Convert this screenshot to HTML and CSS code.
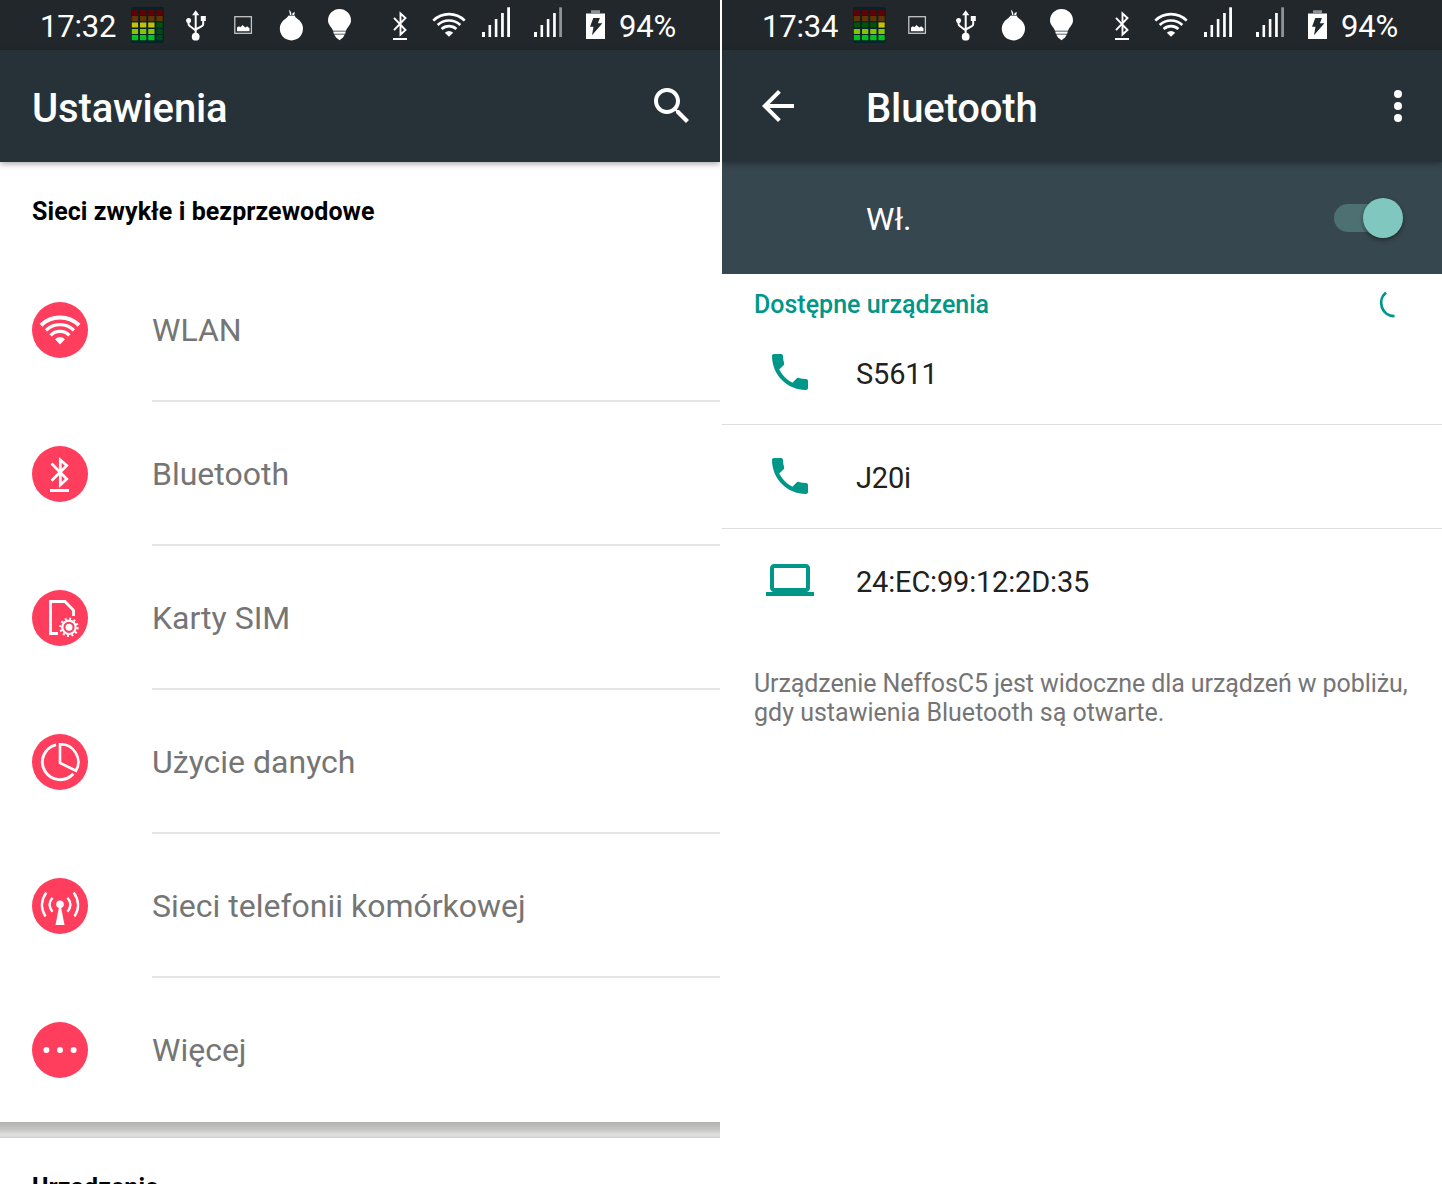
FILE: index.html
```html
<!DOCTYPE html>
<html lang="pl">
<head>
<meta charset="utf-8">
<title>Ustawienia</title>
<link rel="stylesheet" href="styles.css">
</head>
<body>
<svg class="sprite" aria-hidden="true">
  <symbol id="usb" viewBox="0 0 48 50">
    <path d="M23.700 14V36M16.500 21v2.800q0 1.500 1.300 2.200L23.700 30.500M31.200 19v5q0 1.500-1.300 2.200L23.700 29.500" fill="none" stroke="#fff" stroke-width="2"/>
    <path d="M23.700 10.200l3.600 5h-7.200zM28.800 16h5v5h-5z" fill="#fff"/>
    <circle cx="16.600" cy="20.600" r="2.500" fill="#fff"/><circle cx="23.700" cy="36.700" r="3.900" fill="#fff"/>
  </symbol>
  <symbol id="image" viewBox="0 0 48 50">
    <rect x="14.800" y="16.700" width="16.600" height="16.600" fill="none" stroke="#c3c5c6" stroke-width="1.300"/>
    <path d="M17 31.300v-3.800l1.800-1.200 1.500 1 2.300-2.400 1.800 1.800 1.200.8 1.500-1.200 2.400 2v3z" fill="#fff"/>
  </symbol>
  <symbol id="onion" viewBox="0 0 48 50">
    <path d="M20.500 15h6q.3 2.400 3.100 4a11.600 11.600 0 1 1-12.400 0q2.800-1.600 3.300-4z" fill="#fff"/>
    <path d="M22.200 15.500L20.900 9.500l2.100 2.500.5 3.500zM24.100 15.500l.5-2.400 2.300-1.200-.8 3.600z" fill="#fff"/>
    <path d="M20 15.500h6.800" stroke="#22272b" stroke-width=".6"/>
  </symbol>
  <symbol id="bulb" viewBox="0 0 48 50">
    <path d="M23.500 9A11.500 11.500 0 0 1 35 20.500c0 4.500-4 6.800-5 10.200H17c-1-3.400-5-5.700-5-10.200A11.500 11.500 0 0 1 23.500 9zM17.200 31.500h12.600l-.6 2.300H17.800zM18.200 34.600h10.600l-1.800 3-3.500 2.700-3.500-2.700z" fill="#fff"/>
  </symbol>
  <symbol id="bt" viewBox="384 0 40 50">
    <path d="M394 17.800L405.500 30 400.500 34.500V13.500L405.500 18 394 30.200" fill="none" stroke="#fff" stroke-width="1.900"/><path d="M393 38h14v2h-14z" fill="#fff"/>
  </symbol>
  <symbol id="wifi" viewBox="424 0 50 50">
    <path d="M433.300 20.600A22.500 22.500 0 0 1 464.700 20.600M437.700 25A16.500 16.500 0 0 1 460.300 25M441.600 28.900A11 11 0 0 1 456.400 28.900" fill="none" stroke="#fff" stroke-width="2.700"/>
    <path d="M444.800 32.800Q449 29 453.200 32.800L449 36.800z" fill="#fff"/>
  </symbol>
  <symbol id="signal" viewBox="474 0 52 50">
    <path d="M482 32h3v5h-3zM488.500 25h2.600v12h-2.600zM494.800 19h2.600v18h-2.600zM501.100 13h2.700v24h-2.700z" fill="#fff"/><path d="M507.200 7.300h2.800V37h-2.800z" fill="currentColor"/>
  </symbol>
  <symbol id="battery" viewBox="578 0 35 50">
    <path d="M591 10.300h9V13h5v2h-19v-2h5z" fill="#8f9395"/><path d="M586 14h19v25h-19z" fill="#fff"/>
    <path d="M593.300 18h6.600l-2 5.300h4.500L592 35.300l1.500-8.600h-3.500z" fill="#22272b"/>
  </symbol>
  <symbol id="phone" viewBox="0 0 24 24">
    <path fill="#009688" d="M6.620 10.790c1.440 2.830 3.760 5.140 6.590 6.590l2.200-2.200c.27-.27.67-.36 1.020-.24 1.120.37 2.330.57 3.570.57.550 0 1 .45 1 1V20c0 .55-.45 1-1 1-9.390 0-17-7.610-17-17 0-.55.45-1 1-1h3.500c.55 0 1 .45 1 1 0 1.250.2 2.450.57 3.570.11.35.03.74-.25 1.020l-2.200 2.200z"/>
  </symbol>
</svg>

<main class="screens">
  <section class="screen">
    <div class="status">
      <span class="clock">17:32</span>
      <svg class="slot" viewBox="0 0 48 50"><rect x="7" y="7" width="33" height="36" rx="3" fill="#02222c"/>
        <g fill="none" stroke-width="5.200">
          <path d="M7.800 12.500H39" stroke="#600202" stroke-dasharray="6.300 1.900"/>
          <path d="M7.800 18.700H39" stroke="#643402" stroke-dasharray="6.300 1.900"/>
          <path d="M7.800 25H31" stroke="#c8c002" stroke-dasharray="6.300 1.900"/>
          <path d="M7.800 31.500H31" stroke="#86c402" stroke-dasharray="6.300 1.900"/>
          <path d="M7.800 37.700H31" stroke="#02c41c" stroke-dasharray="6.300 1.900"/>
          <path d="M32.400 25h6.300" stroke="#025402"/><path d="M32.400 31.500h6.300M32.400 37.700h6.300" stroke="#024a10"/>
        </g></svg>
      <svg class="slot"><use href="#usb"/></svg>
      <svg class="slot"><use href="#image"/></svg>
      <svg class="slot"><use href="#onion"/></svg>
      <svg class="slot"><use href="#bulb"/></svg>
      <div class="system">
        <svg class="s-bt"><use href="#bt"/></svg>
        <svg class="s-wifi"><use href="#wifi"/></svg>
        <svg class="s-signal"><use href="#signal"/></svg>
        <svg class="s-signal s-weak"><use href="#signal"/></svg>
        <svg class="s-battery"><use href="#battery"/></svg>
        <span class="percent">94%</span>
      </div>
    </div>
    <header class="appbar appbar-main">
      <h1 class="title">Ustawienia</h1>
      <svg class="action" viewBox="0 0 24 24"><path fill="#fff" d="M15.500 14h-.79l-.28-.27C15.410 12.590 16 11.110 16 9.500 16 5.910 13.090 3 9.500 3S3 5.910 3 9.500 5.910 16 9.500 16c1.610 0 3.090-.59 4.230-1.570l.27.28v.79l5 4.990L20.490 19l-4.990-5zm-6 0C7.010 14 5 11.990 5 9.500S7.010 5 9.500 5 14 7.010 14 9.500 11.990 14 9.500 14z"/></svg>
    </header>
    <h2 class="category">Sieci zwykłe i bezprzewodowe</h2>
    <ul class="settings">
      <li class="setting">
        <svg class="badge" viewBox="0 0 56 56"><circle cx="28" cy="28" r="28" fill="#ff3d5d"/>
          <path d="M9 23.300A27.300 27.300 0 0 1 47 23.300" fill="none" stroke="#fff" stroke-width="4"/>
          <path d="M14 28.400A20 20 0 0 1 42 28.400M18.600 33.300A13.200 13.200 0 0 1 37.400 33.300" fill="none" stroke="#fff" stroke-width="3.200"/>
          <path d="M23 37.300Q28 32.500 33 37.300L28 42.500z" fill="#fff"/></svg>
        <span class="label">WLAN</span>
      </li>
      <li class="setting">
        <svg class="badge" viewBox="0 0 56 56"><circle cx="28" cy="28" r="28" fill="#ff3d5d"/>
          <path d="M19.500 17.500L34.800 33 28.300 39V14L34.800 19.500 19.500 34.700" fill="none" stroke="#fff" stroke-width="2.700"/><path d="M18 43h19v3H18z" fill="#fff"/></svg>
        <span class="label">Bluetooth</span>
      </li>
      <li class="setting">
        <svg class="badge" viewBox="0 0 56 56"><circle cx="28" cy="28" r="28" fill="#ff3d5d"/>
          <path d="M26 43.500H18.500V11.500H33L41.500 20.200V26" fill="none" stroke="#fff" stroke-width="2.800"/>
          <circle cx="37" cy="37.300" r="6.700" fill="none" stroke="#fff" stroke-width="2.200"/>
          <circle cx="37" cy="37.300" r="8.600" fill="none" stroke="#fff" stroke-width="2.200" stroke-dasharray="1.900 2.603"/>
          <circle cx="37" cy="37.300" r="3.500" fill="#fff"/></svg>
        <span class="label">Karty SIM</span>
      </li>
      <li class="setting">
        <svg class="badge" viewBox="0 0 56 56"><circle cx="28" cy="28" r="28" fill="#ff3d5d"/>
          <path d="M24 10.800A17.700 17.700 0 1 0 41.300 39.800" fill="none" stroke="#fff" stroke-width="2.900"/>
          <path d="M28 10.300A17.700 17.700 0 0 1 44 36.700L28 29z" fill="none" stroke="#fff" stroke-width="2.600"/></svg>
        <span class="label">Użycie danych</span>
      </li>
      <li class="setting">
        <svg class="badge" viewBox="0 0 56 56"><circle cx="28" cy="28" r="28" fill="#ff3d5d"/>
          <circle cx="28" cy="26.300" r="3.800" fill="#fff"/><path d="M27 29h2l3.500 18h-9z" fill="#fff"/>
          <path d="M20.500 19.700Q14.800 26.500 20.500 33.700M35.500 19.700Q41.200 26.500 35.500 33.700M14.300 14.500Q6 26.500 13.500 38.500M41.700 14.500Q50 26.500 42.500 38.500" fill="none" stroke="#fff" stroke-width="2.400"/></svg>
        <span class="label">Sieci telefonii komórkowej</span>
      </li>
      <li class="setting">
        <svg class="badge" viewBox="0 0 56 56"><circle cx="28" cy="28" r="28" fill="#ff3d5d"/>
          <g fill="#fff"><circle cx="14.400" cy="28" r="3"/><circle cx="28" cy="28" r="3"/><circle cx="41.600" cy="28" r="3"/></g></svg>
        <span class="label">Więcej</span>
      </li>
    </ul>
    <div class="band"></div>
    <h2 class="category">Urządzenie</h2>
  </section>

  <section class="screen">
    <div class="status">
      <span class="clock">17:34</span>
      <svg class="slot" viewBox="0 0 48 50"><rect x="7" y="7" width="33" height="36" rx="3" fill="#02222c"/>
        <g fill="none" stroke-width="5.200">
          <path d="M7.800 12.500H39" stroke="#600202" stroke-dasharray="6.300 1.900"/>
          <path d="M7.800 18.700H39" stroke="#643402" stroke-dasharray="6.300 1.900"/>
          <path d="M7.800 25H31" stroke="#025402" stroke-dasharray="6.300 1.900"/>
          <path d="M7.800 31.500H39" stroke="#86c402" stroke-dasharray="6.300 1.900"/>
          <path d="M7.800 37.700H39" stroke="#02c41c" stroke-dasharray="6.300 1.900"/>
          <path d="M32.400 25h6.300" stroke="#c8c002"/>
        </g></svg>
      <svg class="slot"><use href="#image"/></svg>
      <svg class="slot"><use href="#usb"/></svg>
      <svg class="slot"><use href="#onion"/></svg>
      <svg class="slot"><use href="#bulb"/></svg>
      <div class="system">
        <svg class="s-bt"><use href="#bt"/></svg>
        <svg class="s-wifi"><use href="#wifi"/></svg>
        <svg class="s-signal"><use href="#signal"/></svg>
        <svg class="s-signal s-weak"><use href="#signal"/></svg>
        <svg class="s-battery"><use href="#battery"/></svg>
        <span class="percent">94%</span>
      </div>
    </div>
    <header class="appbar">
      <svg class="action back" viewBox="0 0 24 24"><path fill="#fff" d="M20 11H7.830l5.590-5.590L12 4l-8 8 8 8 1.410-1.410L7.830 13H20v-2z"/></svg>
      <h1 class="title">Bluetooth</h1>
      <svg class="action" viewBox="0 0 24 24"><g fill="#fff"><circle cx="12" cy="6" r="2"/><circle cx="12" cy="12" r="2"/><circle cx="12" cy="18" r="2"/></g></svg>
    </header>
    <div class="switchbar">
      <span class="state">Wł.</span>
      <span class="track"><span class="thumb"></span></span>
    </div>
    <div class="available">
      <h2 class="available-title">Dostępne urządzenia</h2>
      <svg class="spinner" viewBox="0 0 32 32"><path d="M8 5.700A13.200 13.200 0 0 0 16.500 29.100" fill="none" stroke="#009688" stroke-width="2.800"/></svg>
    </div>
    <ul class="devices">
      <li class="device"><svg class="kind"><use href="#phone"/></svg><span class="name">S5611</span></li>
      <li class="device"><svg class="kind"><use href="#phone"/></svg><span class="name">J20i</span></li>
      <li class="device"><svg class="kind" viewBox="0 0 24 24"><path fill="#009688" d="M20 18c1.100 0 1.990-.9 1.990-2L22 6c0-1.100-.9-2-2-2H4c-1.100 0-2 .9-2 2v10c0 1.100.9 2 2 2H0v2h24v-2h-4zM4 6h16v10H4V6z"/></svg><span class="name">24:EC:99:12:2D:35</span></li>
    </ul>
    <p class="note">Urządzenie NeffosC5 jest widoczne dla urządzeń w pobliżu,<br>gdy ustawienia Bluetooth są otwarte.</p>
  </section>
</main>
</body>
</html>
```
FILE: styles.css
```css
* { box-sizing: border-box; }
body { margin: 0; background: #fff; font-family: Roboto, "Noto Sans", sans-serif; color: #212121; }
h1, h2, p, ul { margin: 0; padding: 0; }
ul { list-style: none; }
svg { display: block; flex: none; }
.sprite { display: none; }

.screens { display: grid; grid-template-columns: 720px 720px; column-gap: 2px; height: 1184px; overflow: hidden; }
.screen { height: 1184px; overflow: hidden; background: #fff; }

.status { display: flex; align-items: center; height: 50px; background: #22272b; color: #fff; }
.clock { width: 124px; padding: 4px 0 0 40px; font-size: 31px; line-height: 38px; letter-spacing: -.2px; white-space: nowrap; }
.slot { width: 48px; height: 50px; }
.system { display: flex; align-items: center; margin-left: 20px; }
.s-bt { width: 40px; height: 50px; }
.s-wifi { width: 50px; height: 50px; }
.s-signal { width: 52px; height: 50px; color: #fff; }
.s-weak { color: #8f9395; }
.s-battery { width: 35px; height: 50px; }
.percent { padding: 4px 0 0 6px; font-size: 31px; line-height: 38px; letter-spacing: -.2px; }

.appbar { display: flex; align-items: center; height: 112px; padding: 0 20px 0 32px; background: #263238; position: relative; box-shadow: 0 2px 6px rgba(0, 0, 0, .35); }
.appbar-main { padding-right: 24px; }
.title { flex: 1; padding-top: 6px; color: #fff; font-size: 40px; line-height: 48px; font-weight: 500; letter-spacing: -.15px; }
.action { width: 48px; height: 48px; }
.back { margin-right: 64px; }

.category { height: 96px; padding: 35px 32px 0; font-size: 25px; line-height: 30px; font-weight: 700; letter-spacing: .07px; color: #000; white-space: nowrap; }
.setting { display: flex; height: 144px; padding-left: 32px; align-items: center; }
.badge { width: 56px; height: 56px; margin-right: 64px; }
.label { flex: 1; height: 144px; border-bottom: 2px solid #e4e4e4; font-size: 32px; line-height: 144px; color: #757575; }
.setting:last-child .label { border-bottom: 0; }
.band { height: 16px; background: linear-gradient(#b2b2b0, #c4c4c2 45%, #dededc 75%, #dededc 88%, #cececc); }

.switchbar { display: flex; align-items: center; justify-content: space-between; height: 112px; padding: 0 40px 0 144px; background: #37474f; }
.state { padding-top: 2px; font-size: 32px; line-height: 40px; color: #fff; }
.track { display: flex; justify-content: flex-end; align-items: center; width: 68px; height: 28px; border-radius: 14px; background: #4d7072; }
.thumb { width: 40px; height: 40px; margin-right: -1px; border-radius: 50%; background: #80c7c0; box-shadow: 0 2px 4px rgba(0, 0, 0, .4); }

.available { display: flex; justify-content: space-between; height: 46px; padding: 13px 32px 0; }
.available-title { padding-top: 3px; font-size: 25px; line-height: 30px; font-weight: 500; color: #009688; }
.spinner { width: 32px; height: 32px; }
.device { display: flex; align-items: center; height: 104px; padding-left: 44px; }
.device + .device { box-shadow: inset 0 1px #dedede; }
.kind { width: 48px; height: 48px; margin-right: 42px; }
.name { padding-top: 4px; font-size: 29px; line-height: 36px; letter-spacing: -.18px; }
.note { padding: 37px 32px 0; font-size: 25px; line-height: 29px; color: #757575; white-space: nowrap; }
.note::first-line { letter-spacing: -.09px; }
```
